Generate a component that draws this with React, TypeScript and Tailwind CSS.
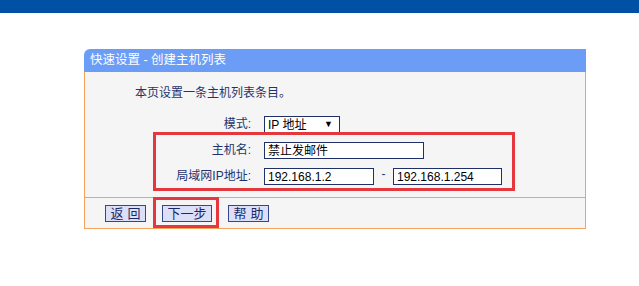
import React from "react";

const font = { fontFamily: '"Liberation Sans", "Noto Sans CJK SC", sans-serif' };

function Row({ label, children }: { label: string; children: React.ReactNode }) {
  return (
    <div className="flex items-center h-[17px]">
      <div className="w-[169px] text-right pr-[3px] text-[12px] leading-[17px] text-[#1e3470] whitespace-nowrap">{label}</div>
      <div className="ml-[10px] flex items-center">{children}</div>
    </div>
  );
}

function Btn({ children, spaced }: { children: React.ReactNode; spaced?: boolean }) {
  return (
    <div
      className={
        spaced
          ? "h-[17px] flex items-center justify-center whitespace-nowrap bg-[#dcdff8] border border-[#34468e] text-[#1b2a66] text-[13px] leading-[15px] tracking-[4px] pl-[4px]"
          : "h-[17px] flex items-center justify-center whitespace-nowrap bg-[#dcdff8] border border-[#34468e] text-[#1b2a66] text-[13px] leading-[15px]"
      }
    >
      {children}
    </div>
  );
}

export default function App() {
  return (
    <div className="w-[639px] h-[286px] bg-white relative overflow-hidden" style={font}>
      <div className="h-[13px] bg-[#0050a6]" />
      <div className="ml-[84px] mt-[36px] w-[502px]">
        <div className="h-[23px] bg-[#6b9cf6] rounded-tl-[6px] text-white text-[12.5px] leading-[23px] pl-[6px] whitespace-pre">
          快速设置 - 创建主机列表
        </div>
        <div className="w-[502px] bg-[#f5f5f5] border-x border-[#f2a45a]">
          <div className="pt-[13px] pl-[50px] text-[12px] leading-[16px] text-[#1e3470] h-[28px]">
            本页设置一条主机列表条目。
          </div>
          <div className="pt-[16px] pb-[12px] flex flex-col gap-[9px]">
            <Row label="模式:">
              <div className="w-[76px] h-[17px] bg-white border border-[#1f2f68] flex items-center justify-between px-[3px] text-[12px] text-black">
                <span>IP 地址</span>
                <span className="text-[9px] mr-[3px]">▼</span>
              </div>
            </Row>
            <Row label="主机名:">
              <div className="w-[160px] h-[17px] bg-white border border-[#1f2f68] flex items-center px-[3px] text-[12px] text-black">
                禁止发邮件
              </div>
            </Row>
            <Row label="局域网IP地址:">
              <div className="w-[110px] h-[17px] bg-white border border-[#1f2f68] flex items-center px-[3px] text-[12px] text-black">
                192.168.1.2
              </div>
              <span className="w-[19px] text-center text-[12px] text-[#1e3470] -mt-[6px]">-</span>
              <div className="w-[109px] h-[17px] bg-white border border-[#1f2f68] flex items-center px-[3px] text-[12px] text-black">
                192.168.1.254
              </div>
            </Row>
          </div>
        </div>
        <div className="w-[502px] h-[32px] bg-[#f5f5f5] border border-[#f2a45a] flex items-center pl-[20px]">
          <div className="w-[41px]"><Btn spaced>返回</Btn></div>
          <div className="w-[50px] ml-[16px]"><Btn>下一步</Btn></div>
          <div className="w-[41px] ml-[16px]"><Btn spaced>帮助</Btn></div>
        </div>
      </div>
      <div className="absolute left-[153px] top-[132px] w-[362px] h-[59px] border-[3px] border-[#e5383e]" />
      <div className="absolute left-[153px] top-[197px] w-[66px] h-[31px] border-[3px] border-[#e5383e]" />
    </div>
  );
}
